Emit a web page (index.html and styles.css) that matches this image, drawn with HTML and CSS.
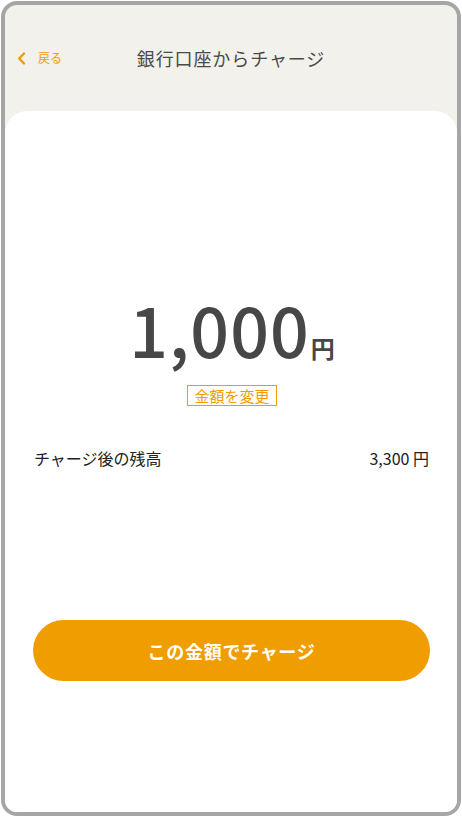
FILE: index.html
```html
<!DOCTYPE html>
<html lang="ja">
<head>
<meta charset="utf-8">
<title>銀行口座からチャージ</title>
<link rel="stylesheet" href="styles.css">
</head>
<body>
<div class="frame">
  <header class="header">
    <a class="back" href="#">
      <svg class="chev" width="9" height="13" viewBox="0 0 9 13"><path d="M7 1.5 L2.2 6.5 L7 11.5" fill="none" stroke="#f09c00" stroke-width="2.4" stroke-linecap="round" stroke-linejoin="round"/></svg>
      <span class="back-text">戻る</span>
    </a>
    <h1 class="title">銀行口座からチャージ</h1>
    <span class="spacer"></span>
  </header>
  <main class="card">
    <div class="amount"><span class="num">1,000</span><span class="yen">円</span></div>
    <div class="change-wrap"><button class="change">金額を変更</button></div>
    <div class="row">
      <span class="label">チャージ後の残高</span>
      <span class="value">3,300 円</span>
    </div>
    <button class="cta">この金額でチャージ</button>
  </main>
</div>
</body>
</html>
```
FILE: styles.css
```css
* { box-sizing: border-box; }
html, body { margin: 0; padding: 0; background: #fff; }
body { font-family: "Noto Sans CJK JP", "Noto Sans", sans-serif; color: #222; }
.frame {
  margin: 1px 0 0 1px;
  width: 460px;
  height: 815px;
  border: 4px solid #a6a6a6;
  border-radius: 16px;
  overflow: hidden;
  background: #f2f1ec;
  display: flex;
  flex-direction: column;
}
.header {
  height: 106px;
  flex: none;
  display: grid;
  grid-template-columns: 1fr auto 1fr;
  align-items: center;
  padding: 0 12px;
}
.back {
  display: flex;
  align-items: center;
  gap: 12px;
  text-decoration: none;
  color: #f09c00;
}
.chev { display: block; }
.back-text { font-size: 12px; line-height: 16px; }
.title {
  margin: 0;
  font-size: 18px;
  font-weight: 400;
  letter-spacing: 0.05em;
  color: #4a4a4a;
  line-height: 24px;
}
.card {
  flex: 1;
  background: #fff;
  border-radius: 22px 22px 0 0;
  padding: 184px 28px 0 29px;
  display: flex;
  flex-direction: column;
}
.amount {
  text-align: center;
  color: #474747;
  font-weight: 500;
  line-height: 68px;
  height: 68px;
  padding-left: 1px;
}
.num { font-size: 68px; letter-spacing: 1px; }
.yen { font-size: 24px; margin-left: 1px; font-weight: 700; }
.change-wrap { text-align: center; margin-top: 20px; }
.change {
  font-family: inherit;
  background: #fff;
  border: 1px solid #f09c00;
  color: #f09c00;
  font-size: 15px;
  line-height: 19px;
  padding: 0 6px;
  margin: 0 0 0 1px;
  border-radius: 0;
}
.row {
  margin-top: 39px;
  display: flex;
  justify-content: space-between;
  font-size: 16px;
  line-height: 24px;
  color: #222;
}
.cta {
  margin: 150px 0 0 -1px;
  width: 397px;
  height: 61px;
  border: none;
  border-radius: 31px;
  background: #ef9d00;
  color: #fff;
  font-family: inherit;
  font-size: 18px;
  font-weight: 700;
  letter-spacing: 0.04em;
}
```
